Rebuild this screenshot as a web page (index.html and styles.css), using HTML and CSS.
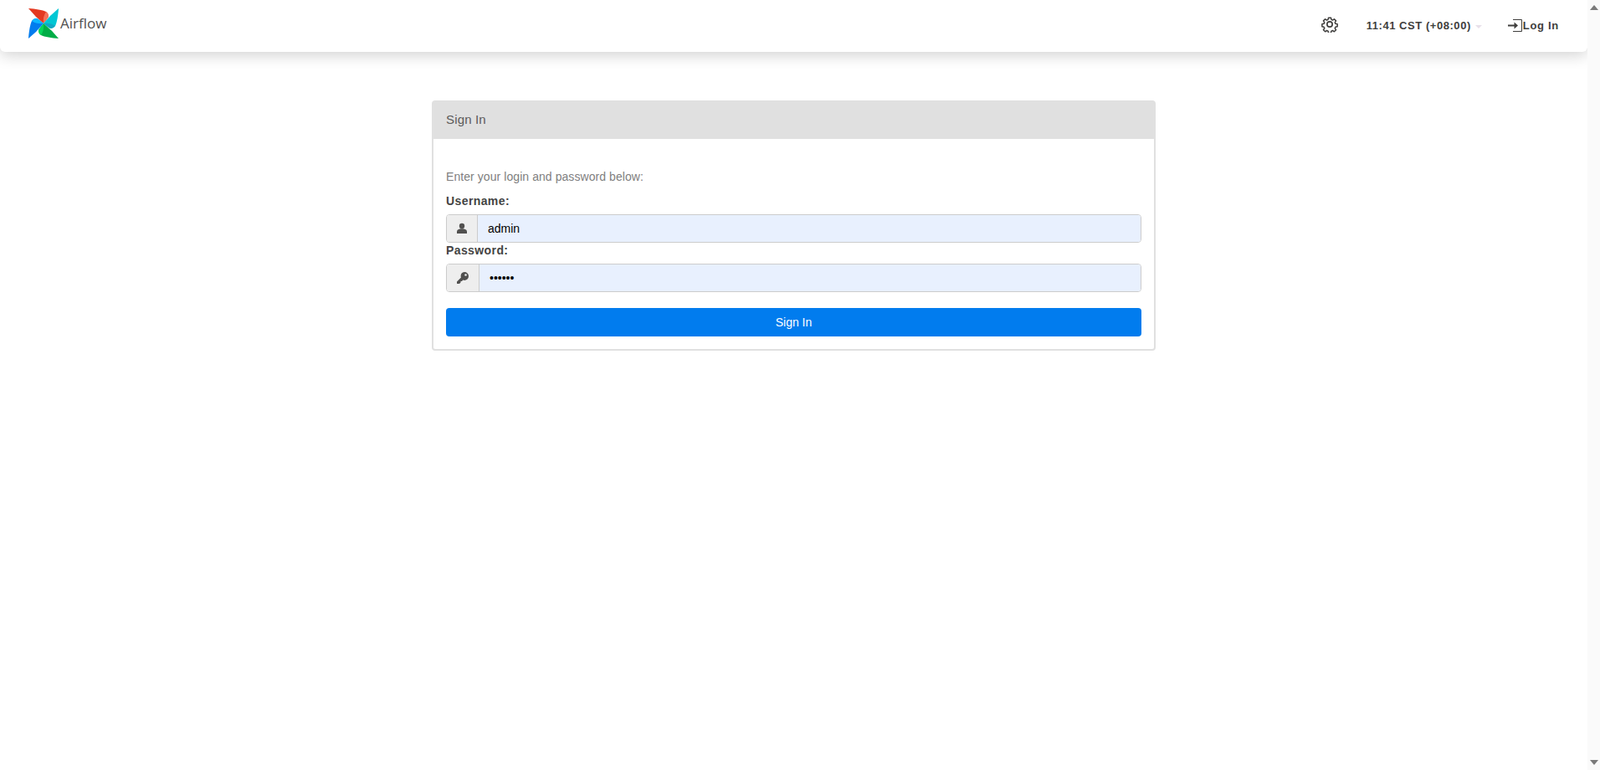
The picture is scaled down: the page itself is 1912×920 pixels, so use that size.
FILE: index.html
```html
<!DOCTYPE html>
<html lang="en">
<head>
    <meta charset="UTF-8">
    <title>Sign In - Airflow</title>
    <link rel="stylesheet" href="styles.css">
</head>
<body>
<div class="page">
    <nav class="navbar">
        <a class="brand" href="#">
            <svg class="brand-logo" viewBox="0 0 36 36" width="36" height="36">
                <path fill="#e43921" d="M0 0 C8 .5 17 2 21 4 Q25 7 23.500 11 L18 18 Q8 10 0 0 Z"/>
                <path fill="#f4725b" d="M21 4 Q25 7 23.500 11 L18 18 Q17 10 21 4 Z"/>
                <path fill="#00c7d4" d="M36 0 C35.500 8 34 17 32 21 Q29 25 25 23.500 L18 18 Q26 8 36 0 Z"/>
                <path fill="#11a8c4" d="M32 21 Q29 25 25 23.500 L18 18 Q26 17 32 21 Z"/>
                <path fill="#00ad46" d="M36 36 C28 35.500 19 34 15 32 Q11 29 12.500 25 L18 18 Q28 26 36 36 Z"/>
                <path fill="#04d659" d="M15 32 Q11 29 12.500 25 L18 18 Q19 26 15 32 Z"/>
                <path fill="#017cee" d="M0 36 C.5 28 2 19 4 15 Q7 11 11 12.500 L18 18 Q10 28 0 36 Z"/>
                <path fill="#0cb6ff" d="M4 15 Q7 11 11 12.500 L18 18 Q10 19 4 15 Z"/>
            </svg>
            <span class="brand-name">Airflow</span>
        </a>
        <div class="nav-right">
            <svg class="gear" viewBox="0 0 24 24" width="20" height="20" fill="none" stroke="#3f3e3d" stroke-width="2" stroke-linejoin="round">
                <path d="M10 1.500 h4 l.6 3 2 .9 2.600-1.700 2.800 2.800 -1.700 2.600 .9 2 3 .6 v4 l-3 .6 -.9 2 1.700 2.600 -2.800 2.800 -2.600-1.700 -2 .9 -.6 3 h-4 l-.6-3 -2-.9 -2.600 1.700 -2.800-2.800 1.700-2.600 -.9-2 -3-.6 v-4 l3-.6 .9-2 -1.700-2.600 2.800-2.800 2.600 1.700 2-.9 z" transform="translate(1.200 1.200) scale(.9)"/>
                <circle cx="12" cy="12" r="3.800"/>
            </svg>
            <span class="clock">11:41 CST (+08:00)</span>
            <span class="caret"></span>
            <a class="login-link" href="#">
                <svg viewBox="0 0 17 15" width="17" height="15" fill="none" stroke="#3f3e3d">
                    <path d="M6 .5 h10.500 v14 h-10.500" stroke-width="1"/>
                    <path d="M0 7.500 h10" stroke-width="2"/>
                    <path d="M7.500 3.500 l4.500 4 -4.500 4 z" fill="#3f3e3d" stroke="none"/>
                </svg>
                Log In
            </a>
        </div>
    </nav>

    <div class="login-wrap">
        <div class="panel">
            <div class="panel-heading">Sign In</div>
            <form class="panel-body">
                <p class="hint">Enter your login and password below:</p>
                <label class="field-label" for="username">Username:</label>
                <div class="input-group">
                    <span class="addon addon-user">
                        <svg viewBox="0 0 14 14" width="14" height="14" fill="#51504f">
                            <circle cx="7" cy="4" r="3.200"/>
                            <path d="M1 13 v-2.500 q0-2 2-2.500 l2.500-.8 h3 l2.500.8 q2 .5 2 2.500 v2.500 z"/>
                        </svg>
                    </span>
                    <input type="text" id="username" value="admin">
                </div>
                <label class="field-label" for="password">Password:</label>
                <div class="input-group">
                    <span class="addon addon-key">
                        <svg viewBox="0 0 14 14" width="14" height="14" fill="#51504f">
                            <path d="M9 0 a5 5 0 0 1 0 10 q-1 0 -1.800-.4 l-1.200 1.400 h-1.500 v1.500 l-1.500 1.500 h-3 v-2.500 l5-5 q-.4-.8 -.4-1.500 a5 5 0 0 1 4.400-5 z"/>
                            <circle cx="10.500" cy="3.500" r="1.300" fill="#eee"/>
                        </svg>
                    </span>
                    <input type="password" id="password" value="secret">
                </div>
                <button type="submit" class="btn-signin">Sign In</button>
            </form>
        </div>
    </div>
</div>
<div class="scrollbar">
    <span class="arrow-up"></span>
    <span class="arrow-down"></span>
</div>
</body>
</html>
```

FILE: styles.css
```css
html, body { height: 100%; }
body {
    margin: 0;
    display: flex;
    overflow: hidden;
    background: #fff;
    color: #51504f;
    font-family: "Liberation Sans", Arial, sans-serif;
    font-size: 14px;
}
a { color: inherit; text-decoration: none; }

.page { flex: 1; min-width: 0; }

.navbar {
    height: 62px;
    display: flex;
    align-items: center;
    justify-content: space-between;
    background: #fff;
    border-radius: 0 0 6px 6px;
    box-shadow: 0 4px 18px rgba(0, 0, 0, 0.18);
}
.brand { display: flex; align-items: center; margin-left: 34px; margin-top: -6px; }
.brand-logo { display: block; }
.brand-name { margin-left: 2px; margin-top: -2px; font-family: "Open Sans", sans-serif; font-size: 17px; color: #51504f; }

.nav-right { display: flex; align-items: center; margin-right: 34px; margin-top: -2px; color: #3f3e3d; font-weight: bold; font-size: 13px; letter-spacing: 0.55px; }
.gear { margin-right: 34px; margin-top: -3px; }
.clock { margin-top: 1px; }
.caret {
    width: 0;
    height: 0;
    margin: 4px 0 0 5px;
    border-top: 4px solid #e8e0ea;
    border-left: 4px solid transparent;
    border-right: 4px solid transparent;
}
.login-link { display: flex; align-items: center; gap: 1px; margin-left: 31px; margin-top: 1px; letter-spacing: 0.7px; }

.login-wrap { width: 865px; margin: 58px auto 0; }
.panel {
    border: 2px solid #e0e0e0;
    border-radius: 4px;
    background: #fff;
}
.panel-heading {
    height: 44px;
    line-height: 42px;
    padding: 0 15px;
    background: #e0e0e0;
    font-size: 15px;
    letter-spacing: 0.15px;
    color: #5c5b5a;
}
.panel-body { padding: 37px 15px 15px; }
.hint { margin: 0 0 14px; line-height: 16px; color: #808080; font-size: 14px; letter-spacing: 0.07px; }
.field-label { display: block; height: 15px; line-height: 15px; margin-bottom: 8px; font-weight: bold; letter-spacing: 0.4px; color: #444; }

.input-group {
    display: flex;
    height: 34px;
    box-sizing: border-box;
    margin-bottom: 2px;
    border: 1px solid #ccc;
    border-radius: 4px;
    overflow: hidden;
}
.addon { display: flex; align-items: center; justify-content: center; background: #eee; border-right: 1px solid #ccc; box-sizing: border-box; }
.addon-user { width: 37px; }
.addon-key { width: 39px; }
.input-group input {
    flex: 1;
    min-width: 0;
    border: none;
    outline: none;
    padding: 0 12px;
    background: #e8f0fe;
    color: #000;
    font-family: "Liberation Sans", Arial, sans-serif;
    font-size: 14px;
}

.btn-signin {
    display: block;
    width: 100%;
    height: 34px;
    margin-top: 19px;
    border: none;
    border-radius: 4px;
    background: #017cee;
    color: #fff;
    font-family: "Liberation Sans", Arial, sans-serif;
    font-size: 14px;
}

.scrollbar {
    width: 15px;
    flex: none;
    display: flex;
    flex-direction: column;
    justify-content: space-between;
    align-items: center;
    padding: 6px 0;
    box-sizing: border-box;
    background: #fafafa;
}
.arrow-up { border-bottom: 6px solid #7a7a7a; border-left: 5px solid transparent; border-right: 5px solid transparent; }
.arrow-down { border-top: 6px solid #7a7a7a; border-left: 5px solid transparent; border-right: 5px solid transparent; }
```
